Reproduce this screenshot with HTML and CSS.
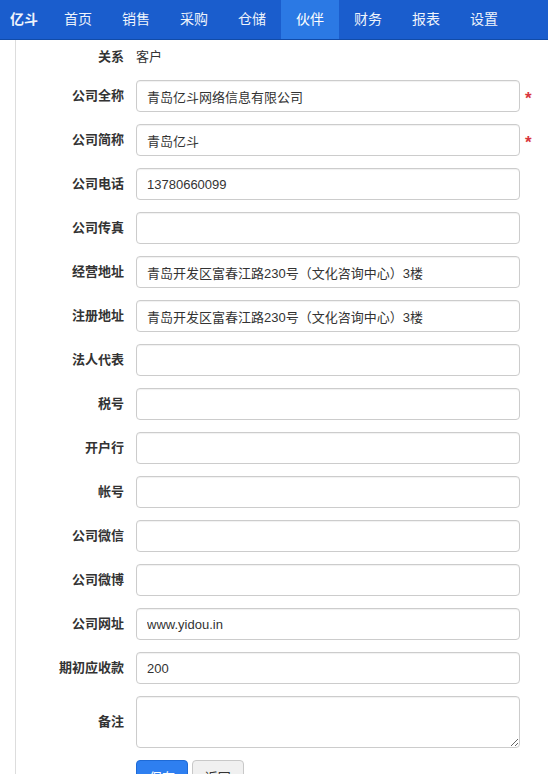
FILE: index.html
```html
<!DOCTYPE html>
<html lang="zh-CN">
<head>
  <meta charset="UTF-8">
  <meta name="viewport" content="width=device-width, initial-scale=1.0">
  <title>亿斗 - 伙伴</title>
  <link rel="stylesheet" href="styles.css">
</head>
<body>

  <nav class="navbar">
    <a class="brand" href="#">亿斗</a>
    <a class="nav-item" href="#">首页</a>
    <a class="nav-item" href="#">销售</a>
    <a class="nav-item" href="#">采购</a>
    <a class="nav-item" href="#">仓储</a>
    <a class="nav-item active" href="#">伙伴</a>
    <a class="nav-item" href="#">财务</a>
    <a class="nav-item" href="#">报表</a>
    <a class="nav-item" href="#">设置</a>
  </nav>

  <div class="content">
    <form class="partner-form">
      <div class="form-row static-row">
        <label>关系</label>
        <span class="static-value">客户</span>
      </div>
      <div class="form-row">
        <label for="fullName">公司全称</label>
        <input class="field" id="fullName" type="text" value="青岛亿斗网络信息有限公司">
        <span class="required">*</span>
      </div>
      <div class="form-row">
        <label for="shortName">公司简称</label>
        <input class="field" id="shortName" type="text" value="青岛亿斗">
        <span class="required">*</span>
      </div>
      <div class="form-row">
        <label for="phone">公司电话</label>
        <input class="field" id="phone" type="text" value="13780660099">
      </div>
      <div class="form-row">
        <label for="fax">公司传真</label>
        <input class="field" id="fax" type="text">
      </div>
      <div class="form-row">
        <label for="bizAddr">经营地址</label>
        <input class="field" id="bizAddr" type="text" value="青岛开发区富春江路230号（文化咨询中心）3楼">
      </div>
      <div class="form-row">
        <label for="regAddr">注册地址</label>
        <input class="field" id="regAddr" type="text" value="青岛开发区富春江路230号（文化咨询中心）3楼">
      </div>
      <div class="form-row">
        <label for="legal">法人代表</label>
        <input class="field" id="legal" type="text">
      </div>
      <div class="form-row">
        <label for="taxNo">税号</label>
        <input class="field" id="taxNo" type="text">
      </div>
      <div class="form-row">
        <label for="bank">开户行</label>
        <input class="field" id="bank" type="text">
      </div>
      <div class="form-row">
        <label for="account">帐号</label>
        <input class="field" id="account" type="text">
      </div>
      <div class="form-row">
        <label for="wechat">公司微信</label>
        <input class="field" id="wechat" type="text">
      </div>
      <div class="form-row">
        <label for="weibo">公司微博</label>
        <input class="field" id="weibo" type="text">
      </div>
      <div class="form-row">
        <label for="site">公司网址</label>
        <input class="field" id="site" type="text" value="www.yidou.in">
      </div>
      <div class="form-row">
        <label for="receivable">期初应收款</label>
        <input class="field" id="receivable" type="text" value="200">
      </div>
      <div class="form-row">
        <label for="remark">备注</label>
        <textarea class="field memo" id="remark"></textarea>
      </div>
      <div class="form-actions">
        <button type="button" class="btn btn-primary">保存</button>
        <button type="button" class="btn btn-default">返回</button>
      </div>
    </form>
  </div>

</body>
</html>
```

FILE: styles.css
```css
body {
  margin: 0;
  font-family: "Liberation Sans", "Noto Sans CJK SC", sans-serif;
  font-size: 13px;
  color: #333;
  background: #fff;
}

.navbar {
  display: flex;
  height: 39px;
  background-color: #1a5dcd;
  border-bottom: 1px solid #114ba8;
}

.navbar a {
  text-decoration: none;
  color: #eef3fb;
  font-size: 14px;
  line-height: 39px;
}

.brand {
  padding: 0 11px 0 10px;
  font-weight: bold;
}

.nav-item {
  padding: 0 15px;
}

.nav-item.active {
  background-color: #2b79e4;
  color: #fff;
}

.content {
  margin-left: 15px;
  border-left: 1px solid #ddd;
  min-height: 734px;
  padding-top: 7px;
}

.form-row {
  display: flex;
  align-items: center;
  margin-bottom: 12px;
}

.form-row label {
  width: 108px;
  margin-right: 12px;
  text-align: right;
  font-weight: bold;
  line-height: 20px;
}

.static-row {
  margin-bottom: 13px;
}

.static-value {
  line-height: 20px;
}

.field {
  width: 384px;
  height: 32px;
  box-sizing: border-box;
  padding: 0 10px;
  border: 1px solid #ccc;
  border-radius: 4px;
  font-family: inherit;
  font-size: 13px;
  color: #333;
  box-shadow: inset 0 1px 1px rgba(0, 0, 0, 0.06);
}

.memo {
  height: 52px;
  padding: 6px 10px;
}

.required {
  margin-left: 5px;
  margin-top: 6px;
  color: #d9363e;
  font-size: 17px;
  font-weight: bold;
}

.form-actions {
  padding-left: 120px;
}

.btn {
  height: 32px;
  padding: 0 12px;
  border-radius: 4px;
  font-family: inherit;
  font-size: 13px;
  cursor: pointer;
}

.btn-primary {
  background-color: #2e7ff0;
  border: 1px solid #1e6ad6;
  color: #fff;
}

.btn-default {
  background-color: #f0f0f0;
  border: 1px solid #c8c8c8;
  color: #333;
}
```
